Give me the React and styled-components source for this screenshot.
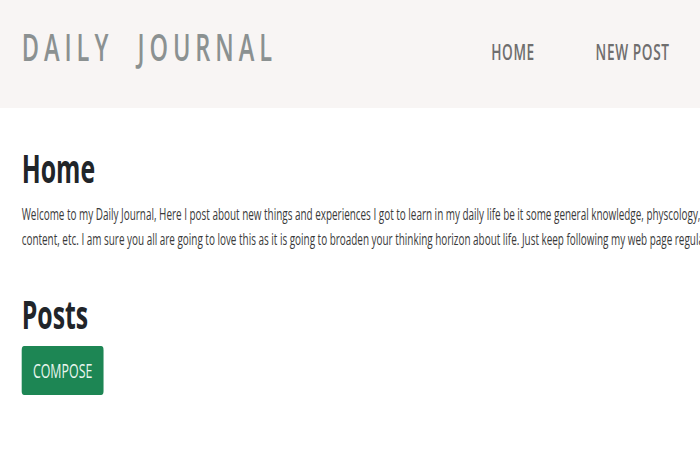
import React from "react";
import styled, { createGlobalStyle } from "styled-components";

const SQUISH = 0.62;

const GlobalStyle = createGlobalStyle`
  html, body {
    margin: 0;
    padding: 0;
    background: #ffffff;
    overflow: hidden;
  }
  body {
    font-family: "Open Sans", "Noto Sans", sans-serif;
    color: #212529;
  }
`;

const Viewport = styled.div`
  width: 700px;
  height: 475px;
  overflow: hidden;
`;

const Page = styled.div`
  width: ${700 / SQUISH}px;
  transform: scaleX(${SQUISH});
  transform-origin: 0 0;
`;

const NavBar = styled.header`
  display: flex;
  align-items: flex-start;
  justify-content: space-between;
  height: 108px;
  box-sizing: border-box;
  padding: 22px 49px 0 35px;
  background-color: #f8f5f4;
`;

const Brand = styled.div`
  font-size: 38px;
  font-weight: 600;
  line-height: 48px;
  letter-spacing: 8px;
  word-spacing: 21px;
  color: #8b9191;
`;

const NavList = styled.nav`
  display: flex;
  gap: 98px;
  padding-top: 14px;
`;

const NavLink = styled.a`
  font-size: 22px;
  font-weight: 600;
  line-height: 30px;
  letter-spacing: 1px;
  color: #6f6e6e;
  text-decoration: none;
`;

const Content = styled.main`
  padding: 36px 35px 0;
`;

const Heading = styled.h1`
  margin: 0 0 ${(p) => p.$gap || 8}px;
  font-size: 40px;
  font-weight: 700;
  line-height: 1.2;
  color: #212529;
`;

const Intro = styled.p`
  margin: 0 0 38px;
  font-size: 16px;
  line-height: 25px;
  color: #3a3a3a;
  white-space: nowrap;
`;

const ComposeButton = styled.button`
  display: inline-flex;
  align-items: center;
  justify-content: center;
  width: 132px;
  height: 49px;
  border: none;
  border-radius: 4px;
  background-color: #1d8654;
  color: #e9f6ef;
  font-family: inherit;
  font-size: 20px;
  cursor: pointer;
`;

export default function App() {
  return (
    <>
      <GlobalStyle />
      <Viewport>
        <Page>
          <NavBar>
            <Brand>DAILY JOURNAL</Brand>
            <NavList>
              <NavLink href="#">HOME</NavLink>
              <NavLink href="#">NEW POST</NavLink>
            </NavList>
          </NavBar>
          <Content>
            <Heading $gap={10}>Home</Heading>
            <Intro>
              Welcome to my Daily Journal, Here I post about new things and
              experiences I got to learn in my daily life be it some general
              knowledge, physcology,
              <br />
              content, etc. I am sure you all are going to love this as it is
              going to broaden your thinking horizon about life. Just keep
              following my web page regularly.
            </Intro>
            <Heading $gap={8}>Posts</Heading>
            <ComposeButton>COMPOSE</ComposeButton>
          </Content>
        </Page>
      </Viewport>
    </>
  );
}
